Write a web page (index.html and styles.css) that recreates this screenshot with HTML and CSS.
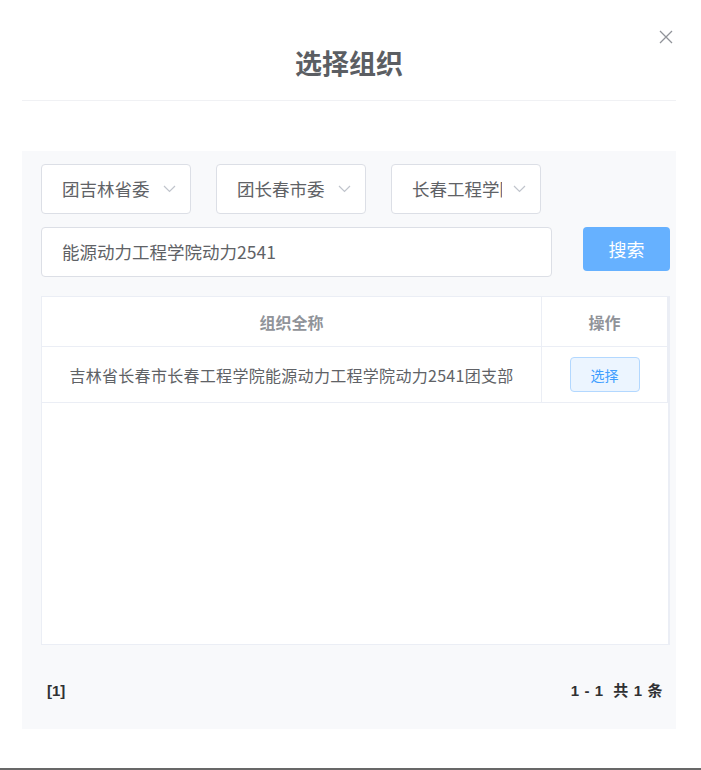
FILE: index.html
```html
<!DOCTYPE html>
<html lang="zh-CN">
<head>
<meta charset="utf-8">
<title>选择组织</title>
<link rel="stylesheet" href="styles.css">
</head>
<body>
<div class="dialog">
  <div class="dialog-header">
    <h2 class="dialog-title">选择组织</h2>
    <button class="close-btn" aria-label="关闭">
      <svg width="14" height="14" viewBox="0 0 14 14"><path d="M1 1 L13 13 M13 1 L1 13" stroke="#909399" stroke-width="1.3" fill="none"/></svg>
    </button>
  </div>
  <div class="panel">
    <div class="select-row">
      <div class="select"><span class="select-text">团吉林省委</span><span class="chev"><svg width="13" height="8" viewBox="0 0 13 8"><path d="M1 1 L6.5 6.5 L12 1" stroke="#c0c4cc" stroke-width="1.2" fill="none"/></svg></span></div>
      <div class="select"><span class="select-text">团长春市委</span><span class="chev"><svg width="13" height="8" viewBox="0 0 13 8"><path d="M1 1 L6.5 6.5 L12 1" stroke="#c0c4cc" stroke-width="1.2" fill="none"/></svg></span></div>
      <div class="select"><span class="select-text">长春工程学院</span><span class="chev"><svg width="13" height="8" viewBox="0 0 13 8"><path d="M1 1 L6.5 6.5 L12 1" stroke="#c0c4cc" stroke-width="1.2" fill="none"/></svg></span></div>
    </div>
    <div class="search-row">
      <div class="search-input">能源动力工程学院动力2541</div>
      <button class="search-btn">搜索</button>
    </div>
    <div class="table-wrap">
      <div class="table">
        <div class="tr th">
          <div class="td c1">组织全称</div>
          <div class="td c2">操作</div>
        </div>
        <div class="tr tb">
          <div class="td c1">吉林省长春市长春工程学院能源动力工程学院动力2541团支部</div>
          <div class="td c2"><button class="pick-btn">选择</button></div>
        </div>
      </div>
    </div>
    <div class="pager">
      <span class="pages">[1]</span>
      <span class="total">1 - 1&nbsp; 共 1 条</span>
    </div>
  </div>
</div>
<div class="bottom-bar"></div>
</body>
</html>
```
FILE: styles.css
```css
* { box-sizing: border-box; }
html, body { margin: 0; padding: 0; }
body {
  width: 701px;
  height: 770px;
  background: #fff;
  font-family: "Noto Sans CJK SC", "Liberation Sans", sans-serif;
  color: #606266;
  overflow: hidden;
}
.dialog {
  position: relative;
  height: 768px;
}
.dialog-header {
  margin: 0 25px 0 22px;
  height: 101px;
  border-bottom: 1px solid #f0f1f4;
  padding-top: 45px;
  text-align: center;
}
.dialog-title {
  margin: 0;
  font-size: 27px;
  line-height: 36px;
  font-weight: bold;
  color: #5b5e63;
}
.close-btn {
  position: absolute;
  top: 29px;
  left: 658px;
  width: 16px;
  height: 16px;
  padding: 0;
  border: 0;
  background: none;
  display: flex;
  align-items: center;
  justify-content: center;
}
.panel {
  margin: 50px 25px 0 22px;
  height: 578px;
  background: #f8f9fb;
  padding: 13px 6px 0 19px;
}
.select-row {
  display: flex;
  gap: 25px;
}
.select {
  width: 150px;
  height: 50px;
  background: #fff;
  border: 1px solid #dcdfe6;
  border-radius: 4px;
  display: flex;
  align-items: center;
  padding-left: 20px;
}
.select-text {
  display: block;
  width: 90px;
  overflow: hidden;
  white-space: nowrap;
  font-size: 17.5px;
  line-height: 24px;
  color: #606266;
}
.chev {
  margin-left: 11px;
  display: flex;
  align-items: center;
}
.search-row {
  display: flex;
  align-items: flex-start;
  margin-top: 13px;
}
.search-input {
  width: 511px;
  height: 50px;
  background: #fff;
  border: 1px solid #dcdfe6;
  border-radius: 4px;
  padding-left: 20px;
  font-size: 17.5px;
  line-height: 48px;
  color: #606266;
}
.search-btn {
  margin-left: 31px;
  width: 87px;
  height: 44px;
  border: 0;
  border-radius: 4px;
  background: #66b1ff;
  color: #fff;
  font-family: inherit;
  font-size: 18px;
  line-height: 42px;
  padding: 0;
}
.table-wrap {
  margin-top: 19px;
  width: 629px;
  height: 349px;
  background: #fff;
  border: 1px solid #ebeef5;
  border-right-width: 2px;
}
.table {
  width: 626px;
  border-right: 1px solid #ebeef5;
}
.tr {
  display: flex;
  border-bottom: 1px solid #ebeef5;
}
.th { height: 50px; }
.tb { height: 56px; }
.td {
  display: flex;
  align-items: center;
  justify-content: center;
}
.c1 {
  width: 500px;
  border-right: 1px solid #ebeef5;
}
.c2 { flex: 1; }
.th .td {
  font-size: 16px;
  font-weight: bold;
  color: #909399;
}
.tb .c1 {
  font-size: 16px;
  letter-spacing: 0.3px;
  color: #606266;
}
.pick-btn {
  width: 70px;
  height: 35px;
  border: 1px solid #b3d8ff;
  background: #ecf5ff;
  color: #409eff;
  border-radius: 4px;
  font-family: inherit;
  font-size: 14px;
  padding: 0;
}
.pager {
  display: flex;
  justify-content: space-between;
  margin-top: 36px;
  padding: 0 7px 0 6px;
  font-family: "Liberation Sans", "Noto Sans CJK SC", sans-serif;
  font-weight: bold;
  font-size: 15px;
  line-height: 20px;
  color: #303133;
}
.total { letter-spacing: 0.6px; }
.bottom-bar {
  height: 2px;
  background: #686868;
}
```
